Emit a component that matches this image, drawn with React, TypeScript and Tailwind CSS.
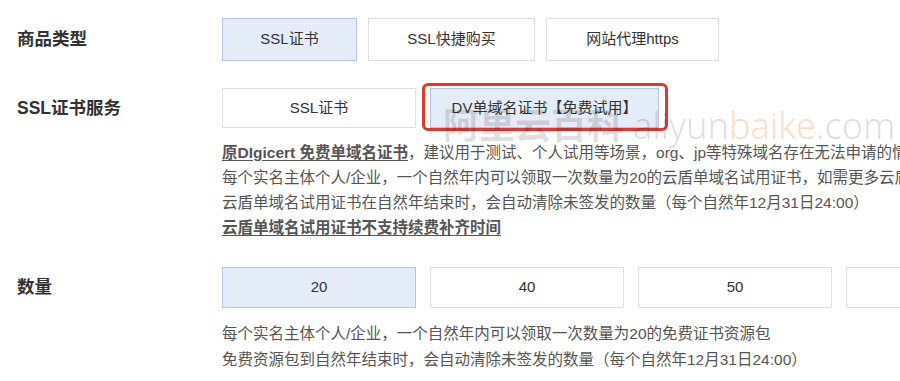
import React from 'react'

const font = { fontFamily: '"Liberation Sans", "Noto Sans CJK SC", sans-serif' }

function OptionButton({ label, selected, className = '' }: { label: string; selected?: boolean; className?: string }) {
  return (
    <div
      className={`flex items-center justify-center border text-[15px] text-[#333] ${
        selected ? 'bg-[#e4ecf8] border-[#b3c7e5]' : 'bg-white border-[#dedede]'
      } ${className}`}
    >
      {label}
    </div>
  )
}

export default function App() {
  return (
    <div className="relative w-[900px] h-[381px] overflow-hidden bg-white" style={font}>
      {/* 商品类型 */}
      <div className="flex items-center pt-[18px]">
        <div className="w-[222px] pl-[17px] text-[17.5px] font-bold text-[#333]">商品类型</div>
        <div className="flex gap-[11px]">
          <OptionButton label="SSL证书" selected className="w-[135px] h-[43px]" />
          <OptionButton label="SSL快捷购买" className="w-[167px] h-[43px]" />
          <OptionButton label="网站代理https" className="w-[173px] h-[43px]" />
        </div>
      </div>

      {/* SSL证书服务 */}
      <div className="flex items-start mt-[27px]">
        <div className="w-[222px] pl-[17px] h-[40px] flex items-center text-[17.5px] font-bold text-[#333]">SSL证书服务</div>
        <div className="flex-1 min-w-0">
          <div className="flex gap-[14px]">
            <OptionButton label="SSL证书" className="w-[194px] h-[40px]" />
            <div className="relative">
              <OptionButton label="DV单域名证书【免费试用】" selected className="w-[229px] h-[40px]" />
              <div className="absolute -left-[8px] -top-[5px] -right-[9px] -bottom-[3px] rounded-[6px] border-[3px] border-[#e0392b]" />
            </div>
          </div>
          <div className="mt-[12px] text-[15.5px] leading-[25px] text-[#555] whitespace-nowrap">
            <div>
              <span className="font-bold underline underline-offset-2">原DIgicert 免费单域名证书</span>，建议用于测试、个人试用等场景，org、jp等特殊域名存在无法申请的情况
            </div>
            <div>每个实名主体个人/企业，一个自然年内可以领取一次数量为20的云盾单域名试用证书，如需更多云盾单域名试用证书</div>
            <div>云盾单域名试用证书在自然年结束时，会自动清除未签发的数量（每个自然年12月31日24:00）</div>
            <div className="font-bold underline underline-offset-2">云盾单域名试用证书不支持续费补齐时间</div>
          </div>
        </div>
      </div>

      {/* 数量 */}
      <div className="flex items-start mt-[27px]">
        <div className="w-[222px] pl-[17px] h-[41px] flex items-center text-[17.5px] font-bold text-[#333]">数量</div>
        <div className="flex-1 min-w-0">
          <div className="flex gap-[14px]">
            <OptionButton label="20" selected className="w-[194px] h-[41px] shrink-0" />
            <OptionButton label="40" className="w-[194px] h-[41px] shrink-0" />
            <OptionButton label="50" className="w-[194px] h-[41px] shrink-0" />
            <OptionButton label="100" className="w-[194px] h-[41px] shrink-0" />
          </div>
          <div className="mt-[13px] text-[15.5px] leading-[26px] text-[#555] whitespace-nowrap">
            <div>每个实名主体个人/企业，一个自然年内可以领取一次数量为20的免费证书资源包</div>
            <div>免费资源包到自然年结束时，会自动清除未签发的数量（每个自然年12月31日24:00）</div>
          </div>
        </div>
      </div>

      {/* watermark */}
      <div className="absolute left-[443px] top-[108px] flex items-baseline pointer-events-none whitespace-nowrap">
        <span className="text-[36px] font-bold text-black/15 leading-none">阿里云百科</span>
        <span className="ml-[10px] text-[36px] font-light leading-none text-black/15" style={{ fontFamily: '"Noto Sans", sans-serif' }}>aliyun</span>
        <span className="text-[36px] font-light leading-none text-[#f08a3c]/30" style={{ fontFamily: '"Noto Sans", sans-serif' }}>baike</span>
        <span className="text-[36px] font-light leading-none text-black/15" style={{ fontFamily: '"Noto Sans", sans-serif' }}>.com</span>
      </div>
    </div>
  )
}
